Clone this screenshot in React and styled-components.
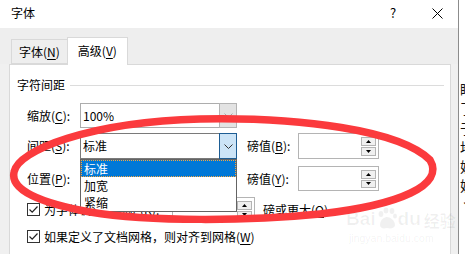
import React from "react";
import styled, { createGlobalStyle } from "styled-components";

const FONT = `"Noto Sans CJK SC", "Noto Sans", "Liberation Sans", sans-serif`;

const Global = createGlobalStyle`
  html, body { margin: 0; padding: 0; background: #fff; overflow: hidden; }
  * { box-sizing: border-box; }
`;

const Page = styled.div`
  position: relative;
  display: flex;
  width: 465px;
  height: 254px;
  overflow: hidden;
  font-family: ${FONT};
  font-size: 12px;
  color: #000;
`;

const Dialog = styled.div`
  width: 459px;
  flex-shrink: 0;
  display: flex;
  flex-direction: column;
  border-right: 1px solid #8c8c8c;
  background: #fff;
`;

const TitleBar = styled.div`
  height: 28px;
  display: flex;
  align-items: center;
  padding: 0 15px 2px 11px;
  background: #fff;
`;

const Title = styled.div`
  flex: 1;
  font-size: 12px;
  line-height: 16px;
`;

const TitleBtn = styled.div`
  width: ${(p) => p.$w}px;
  display: flex;
  justify-content: center;
  align-items: center;
  font-size: 13px;
  line-height: 16px;
`;

const Body = styled.div`
  flex: 1;
  display: flex;
  flex-direction: column;
  background: #f0f0f0;
`;

const TabStrip = styled.div`
  height: 36px;
  display: flex;
  align-items: flex-end;
  padding-left: 11px;
  background: #eeeeee;
  position: relative;
  z-index: 2;
`;

const Tab = styled.div`
  height: ${(p) => (p.$active ? 28 : 25)}px;
  padding: 0 ${(p) => (p.$active ? 10 : 7)}px;
  margin-left: ${(p) => (p.$active ? -1 : 0)}px;
  margin-bottom: ${(p) => (p.$active ? -1 : 0)}px;
  display: flex;
  align-items: center;
  padding-bottom: ${(p) => (p.$active ? 2 : 0)}px;
  border: 1px solid #d9d9d9;
  border-bottom: ${(p) => (p.$active ? "none" : "1px solid #d9d9d9")};
  background: ${(p) => (p.$active ? "#fff" : "#eeeeee")};
  font-size: 12px;
  line-height: 16px;
`;

const Panel = styled.div`
  flex: 1;
  margin: 0 7px 0 9px;
  background: #fff;
  border: 1px solid #d9d9d9;
  border-bottom: none;
  position: relative;
`;

const GroupHeader = styled.div`
  display: flex;
  align-items: center;
  margin: 12px 6px 0 7px;
  height: 16px;
  line-height: 16px;
`;

const GroupLine = styled.div`
  flex: 1;
  margin-left: 5px;
  border-top: 1px solid #dcdcdc;
`;

const Row = styled.div`
  position: relative;
  display: flex;
  align-items: center;
  margin-left: 17px;
  margin-top: ${(p) => p.$mt}px;
  height: ${(p) => p.$h}px;
`;

const Label = styled.div`
  width: ${(p) => p.$w}px;
  flex-shrink: 0;
  line-height: 16px;
  white-space: nowrap;
`;

const U = styled.span`
  text-decoration: underline;
  text-underline-offset: 2px;
  text-decoration-thickness: 1px;
`;

const Combo = styled.div`
  position: relative;
  width: 157px;
  height: 100%;
  flex-shrink: 0;
  display: flex;
  border: 1px solid ${(p) => (p.$focus ? "#7a7a7a" : "#adadad")};
  background: #fff;
`;

const ComboText = styled.div`
  flex: 1;
  display: flex;
  align-items: center;
  padding-left: 2px;
  line-height: 16px;
`;

const ComboButton = styled.div`
  width: 18px;
  margin: -1px -1px -1px 0;
  display: flex;
  align-items: center;
  justify-content: center;
  border: 1px solid ${(p) => (p.$focus ? "#1d5d94" : "#b4b4b4")};
  background: ${(p) => (p.$focus ? "#cce4f7" : "#e3e3e3")};
`;

const DropList = styled.div`
  position: absolute;
  left: -1px;
  top: calc(100% + 1px);
  width: 157px;
  height: 53px;
  border: 1px solid #646464;
  background: #fff;
  z-index: 5;
`;

const DropItem = styled.div`
  height: 17px;
  line-height: 15px;
  padding-left: 2px;
  border: 1px ${(p) => (p.$sel ? "dotted #f4a640" : "solid transparent")};
  background: ${(p) => (p.$sel ? "#0078d7" : "transparent")};
  color: ${(p) => (p.$sel ? "#fff" : "#000")};
`;

const SpinBox = styled.div`
  width: ${(p) => p.$w}px;
  height: 100%;
  flex-shrink: 0;
  display: flex;
  justify-content: flex-end;
  padding: 3px 2px 2px;
  border: 1px solid #b4b4b4;
  background: #fff;
`;

const SpinCol = styled.div`
  width: 15px;
  display: flex;
  flex-direction: column;
  gap: 1px;
`;

const SpinBtn = styled.div`
  flex: 1;
  display: flex;
  align-items: center;
  justify-content: center;
  border: 1px solid #b4b4b4;
  background: #f0f0f0;
`;

const Gap = styled.div`
  width: ${(p) => p.$w}px;
  flex-shrink: 0;
`;

const CheckLabel = styled.div`
  width: ${(p) => p.$w}px;
  flex-shrink: 0;
  display: flex;
  align-items: center;
  gap: 4px;
  line-height: 16px;
  white-space: nowrap;
`;

const Box = styled.div`
  width: 13px;
  height: 13px;
  flex-shrink: 0;
  border: 1px solid #333;
  background: #fff;
  display: flex;
  align-items: center;
  justify-content: center;
`;

const DocStrip = styled.div`
  flex: 1;
  overflow: hidden;
  background: #fff;
  padding: 80px 0 0 1px;
  font-size: 14px;
  line-height: 19.3px;
  color: #111;
  white-space: nowrap;
`;

const Overlay = styled.svg`
  position: absolute;
  left: 0;
  top: 0;
  pointer-events: none;
  z-index: 10;
`;

const Watermark = styled.div`
  position: absolute;
  left: 346px;
  top: 207px;
  z-index: 9;
  display: flex;
  flex-direction: column;
  align-items: flex-start;
  color: rgba(0, 0, 0, 0.06);
  pointer-events: none;
`;

const WmTop = styled.div`
  display: flex;
  align-items: flex-end;
  gap: 1px;
  font-family: "Liberation Sans", sans-serif;
  font-weight: bold;
  font-size: 19px;
  line-height: 20px;
`;

const WmCn = styled.span`
  font-family: ${FONT};
  font-size: 16px;
  line-height: 18px;
  margin-left: 2px;
`;

const WmSub = styled.div`
  font-family: "Liberation Sans", sans-serif;
  font-size: 10.5px;
  line-height: 12px;
  margin-top: 3px;
  margin-left: 3px;
`;

const Chevron = ({ color }) => (
  <svg width="9" height="5" viewBox="0 0 9 5">
    <path d="M0.5 0.5 L4.5 4.5 L8.5 0.5" fill="none" stroke={color} strokeWidth="1" />
  </svg>
);

const Tri = ({ down }) => (
  <svg width="5" height="3" viewBox="0 0 5 3">
    <path d={down ? "M0 0 L5 0 L2.5 3 Z" : "M0 3 L5 3 L2.5 0 Z"} fill="#000" />
  </svg>
);

const Spin = ({ w }) => (
  <SpinBox $w={w}>
    <SpinCol>
      <SpinBtn>
        <Tri />
      </SpinBtn>
      <SpinBtn>
        <Tri down />
      </SpinBtn>
    </SpinCol>
  </SpinBox>
);

const Check = () => (
  <Box>
    <svg width="11" height="11" viewBox="0 0 11 11">
      <path d="M1.5 5.5 L4.2 8.2 L9.5 2.5" fill="none" stroke="#222" strokeWidth="1.2" />
    </svg>
  </Box>
);

export default function App() {
  return (
    <Page>
      <Global />
      <Dialog>
        <TitleBar>
          <Title>字体</Title>
          <TitleBtn $w={12}>?</TitleBtn>
          <Gap $w={32} />
          <TitleBtn $w={12}>
            <svg width="11" height="11" viewBox="0 0 11 11">
              <path d="M0.5 0.5 L10.5 10.5 M10.5 0.5 L0.5 10.5" stroke="#000" strokeWidth="1" />
            </svg>
          </TitleBtn>
        </TitleBar>
        <Body>
          <TabStrip>
            <Tab>
              字体(<U>N</U>)
            </Tab>
            <Tab $active>
              高级(<U>V</U>)
            </Tab>
          </TabStrip>
          <Panel>
            <GroupHeader>
              字符间距
              <GroupLine />
            </GroupHeader>

            <Row $mt={10} $h={25}>
              <Label $w={53}>
                缩放(<U>C</U>):
              </Label>
              <Combo>
                <ComboText>100%</ComboText>
                <ComboButton>
                  <Chevron color="#a6a6a6" />
                </ComboButton>
              </Combo>
            </Row>

            <Row $mt={5} $h={26}>
              <Label $w={53}>
                间距(<U>S</U>):
              </Label>
              <Combo $focus>
                <ComboText>标准</ComboText>
                <ComboButton $focus>
                  <Chevron color="#333" />
                </ComboButton>
                <DropList>
                  <DropItem $sel>标准</DropItem>
                  <DropItem>加宽</DropItem>
                  <DropItem>紧缩</DropItem>
                </DropList>
              </Combo>
              <Gap $w={10} />
              <Label $w={51}>
                磅值(<U>B</U>):
              </Label>
              <Spin w={81} />
            </Row>

            <Row $mt={7} $h={25}>
              <Label $w={53}>
                位置(<U>P</U>):
              </Label>
              <Combo>
                <ComboText />
                <ComboButton>
                  <Chevron color="#333" />
                </ComboButton>
              </Combo>
              <Gap $w={10} />
              <Label $w={51}>
                磅值(<U>Y</U>):
              </Label>
              <Spin w={81} />
            </Row>

            <Row $mt={6} $h={25}>
              <CheckLabel $w={145}>
                <Check />
                <span>
                  为字体调整字间距(<U>K</U>):
                </span>
              </CheckLabel>
              <Spin w={83} />
              <Gap $w={8} />
              <Label $w={90}>
                磅或更大(<U>O</U>)
              </Label>
            </Row>

            <Row $mt={6} $h={17}>
              <CheckLabel $w={300}>
                <Check />
                <span>
                  如果定义了文档网格，则对齐到网格(<U>W</U>)
                </span>
              </CheckLabel>
            </Row>
          </Panel>
        </Body>
      </Dialog>
      <DocStrip>
        瞎<br />了<br />于<br />地<br />妫<br />妫<br />丶
      </DocStrip>

      <Watermark>
        <WmTop>
          <span>Bai</span>
          <svg width="20" height="22" viewBox="0 0 20 22">
            <g fill="rgba(0,0,0,0.06)">
              <ellipse cx="4" cy="7" rx="2.4" ry="3" />
              <ellipse cx="9" cy="3.5" rx="2.4" ry="3" />
              <ellipse cx="15" cy="4" rx="2.4" ry="3" />
              <ellipse cx="18" cy="9" rx="2" ry="2.6" />
              <path d="M3 18 C3 12, 8 10, 10 10 C13 10, 18 13, 18 18 C18 21, 14 22, 10 21 C6 22, 3 21, 3 18 Z" />
            </g>
          </svg>
          <span>du</span>
          <WmCn>经验</WmCn>
        </WmTop>
        <WmSub>jingyan.baidu.com</WmSub>
      </Watermark>

      <Overlay width="465" height="254" viewBox="0 0 465 254">
        <path
          d="M 14 172 C 18 150, 90 122, 200 119 C 300 117, 400 130, 430 160 C 445 185, 400 205, 320 214 C 250 221, 150 222, 90 212 C 40 203, 10 190, 14 172 Z"
          fill="none"
          stroke="#fb3a3d"
          strokeWidth="7.5"
          strokeLinejoin="round"
        />
      </Overlay>
    </Page>
  );
}
